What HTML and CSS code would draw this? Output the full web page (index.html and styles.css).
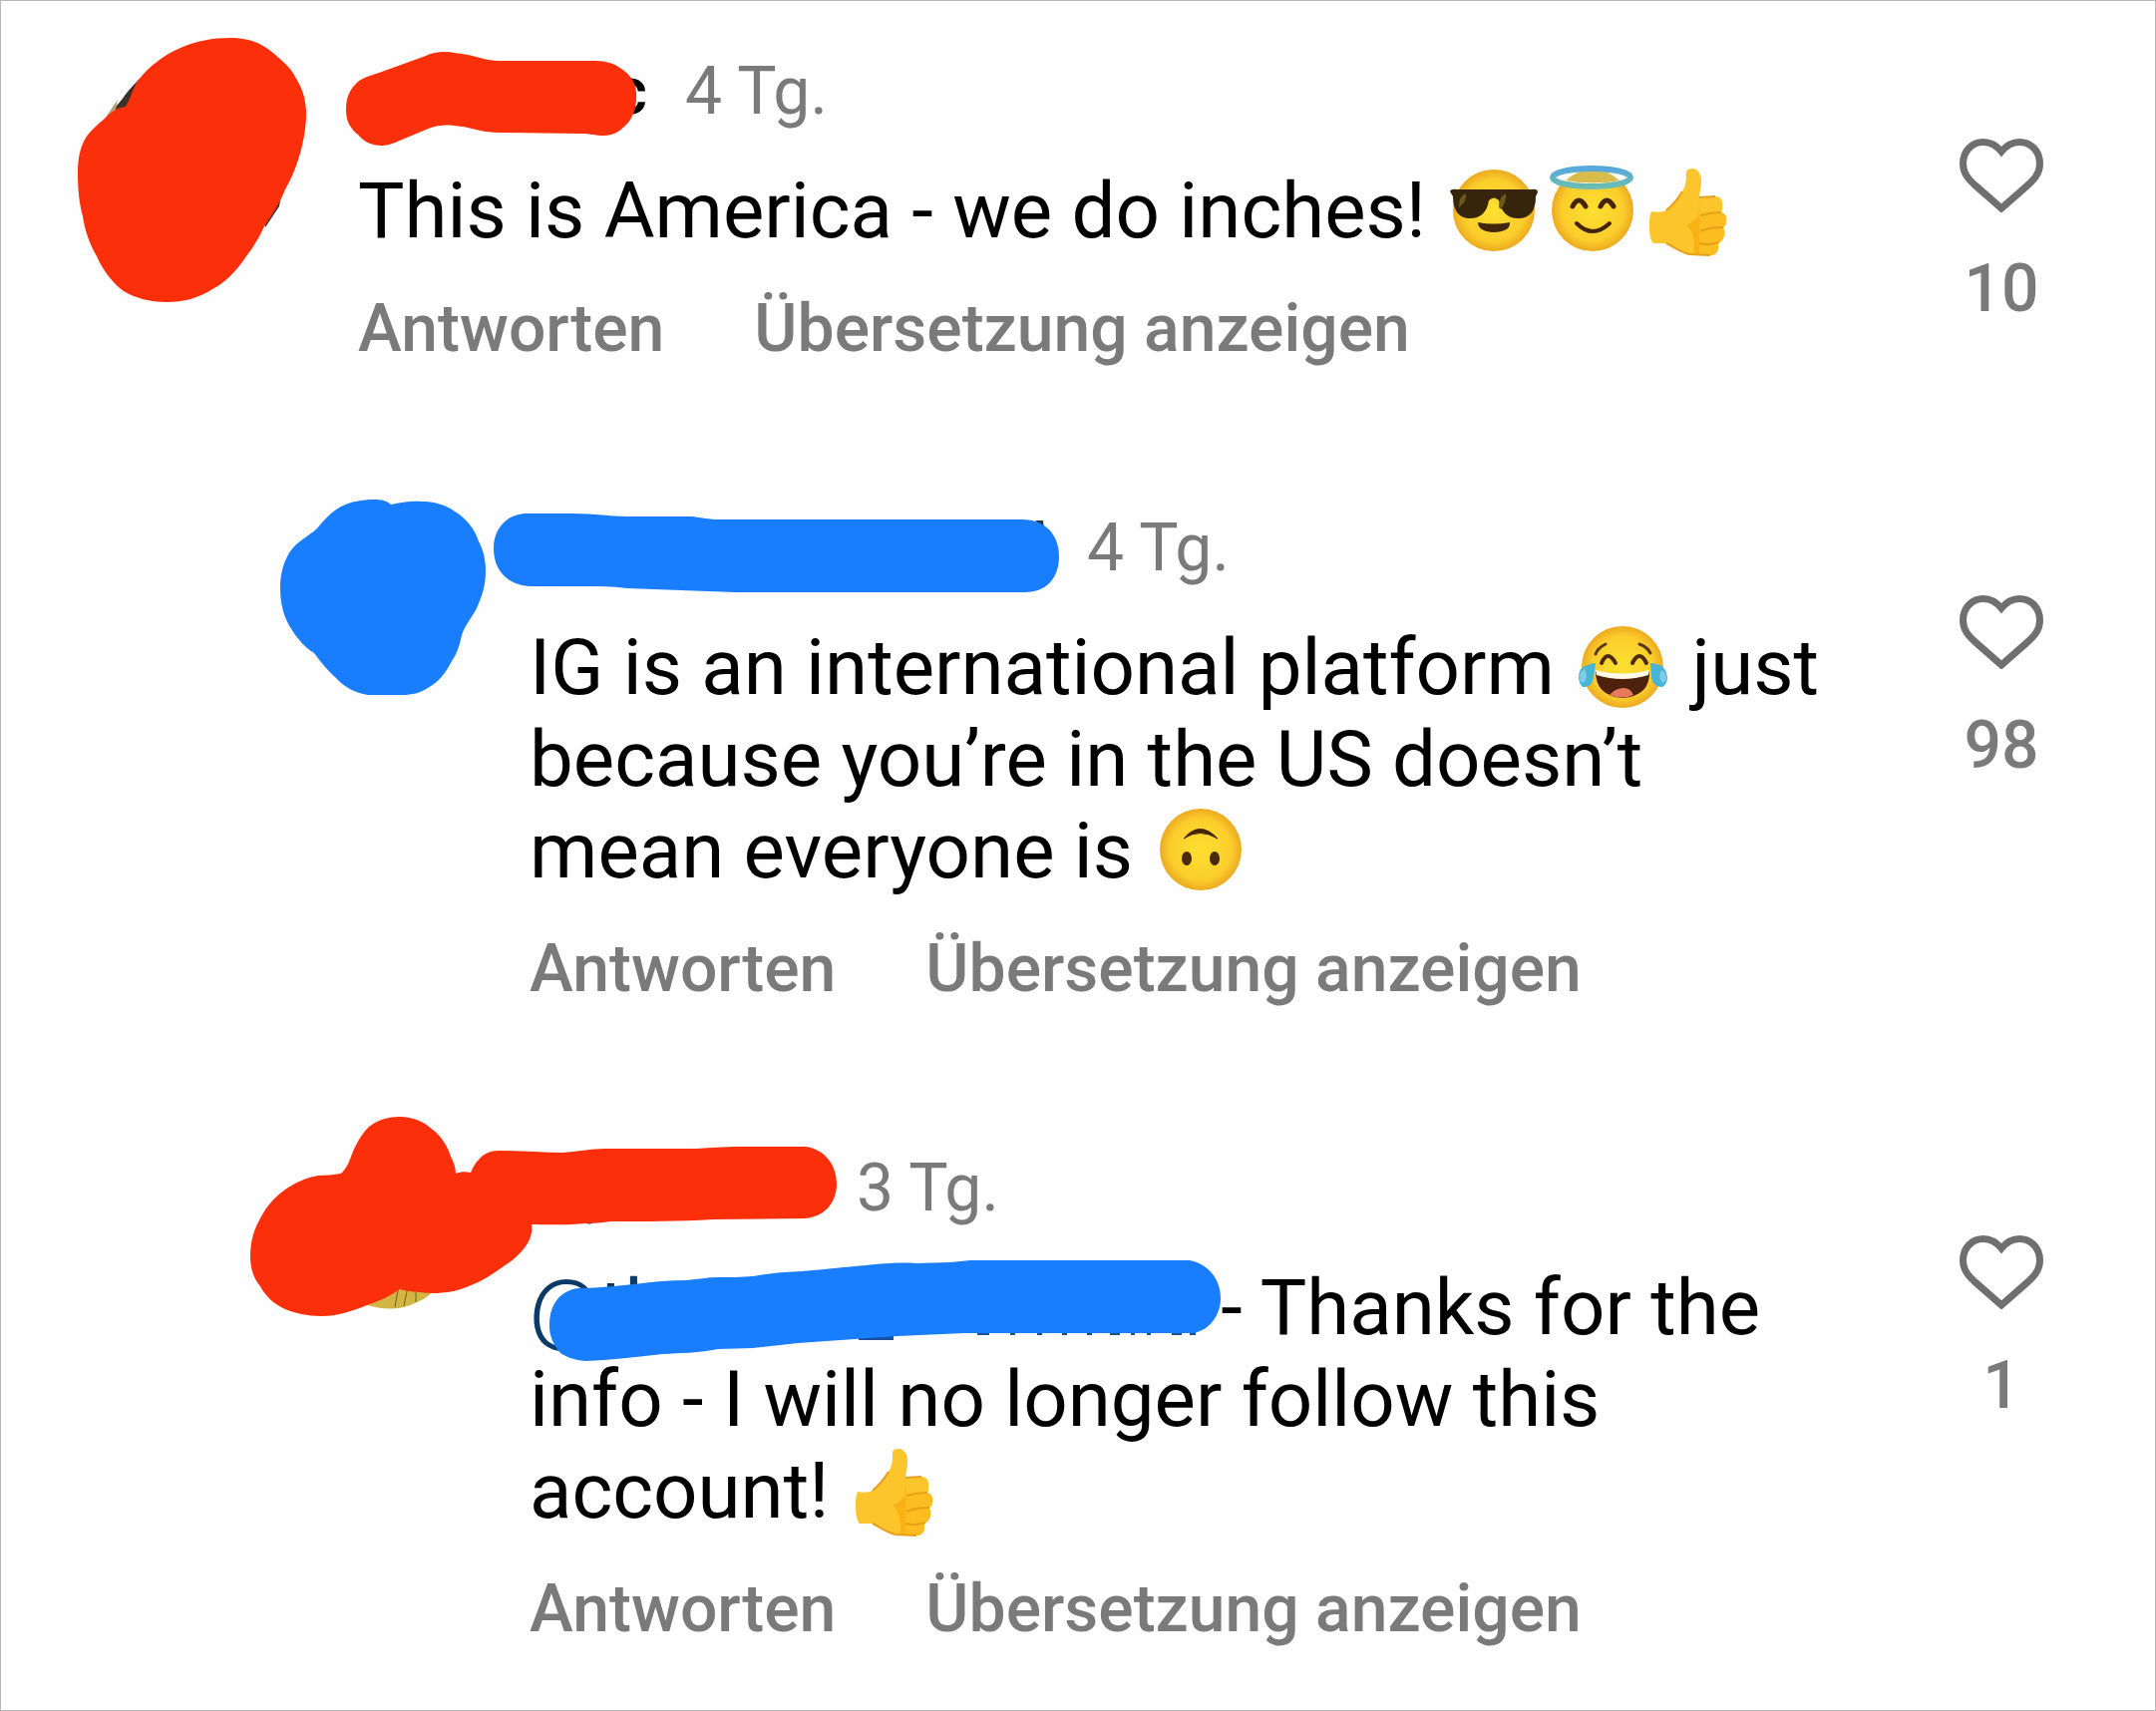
FILE: index.html
```html
<!DOCTYPE html>
<html lang="de">
<head>
<meta charset="utf-8">
<meta name="viewport" content="width=device-width, initial-scale=1">
<title>Kommentare</title>
<link rel="stylesheet" href="styles.css">
</head>
<body>
<svg class="defs" aria-hidden="true">
  <defs>
    <radialGradient id="face" cx="50%" cy="50%" r="50%">
      <stop offset="0" stop-color="#fde030"/>
      <stop offset="0.75" stop-color="#fbcd2c"/>
      <stop offset="1" stop-color="#ecaa20"/>
    </radialGradient>
    <linearGradient id="halo" x1="0" y1="0" x2="0" y2="1">
      <stop offset="0" stop-color="#58a8dc"/>
      <stop offset="1" stop-color="#6bbcb4"/>
    </linearGradient>
    <symbol id="heart" viewBox="0 0 84 74">
      <path d="M42 13C37 7 31 3.500 24 3.500C12 3.500 3.500 13 3.500 25C3.500 35 9 41 17 48L42 70L67 48C75 41 80.500 35 80.500 25C80.500 13 72 3.500 60 3.500C53 3.500 47 7 42 13Z" fill="none" stroke="#6f6f6f" stroke-width="7"/>
    </symbol>
    <symbol id="thumb" viewBox="0 0 99 92">
      <path d="M44 7C44 4 47 3 51 3C56 4 59 9 59 15C59 23 57 28 57 33L73 31C78 31 80 34 80 38C81 42 80 45 79 47C83 48 85 52 84 55C84 59 83 61 81 62C83 66 83 70 80 75C76 78 75 79 76 81C76 86 74 89 70 90C62 90 54 90 47 89C38 87 32 82 24 78L11 78C8 75 7 68 7 61C7 55 7 50 9 46C14 47 19 47 24 45C31 39 36 33 40 26C44 20 44 14 44 7Z" fill="#fcc52b"/>
      <path d="M57 33L56 46C55 52 51 56 45 60C51 66 53 76 52 89L70 90C74 89 76 86 76 81C75 79 76 78 80 75C83 70 83 66 81 62C83 61 84 59 84 55C85 52 83 48 79 47L58 50Z" fill="#fbbd20"/>
      <path d="M45 60C51 66 53 76 52 89L57 89L57 50C55 54 50 57 45 60Z" fill="#f9b116"/>
      <path d="M24 45C31 39 36 33 40 26M57 32L73 31M58 50C65 48 72 47 79 47M58 66C66 62 74 62 81 62M57 78C64 80 70 79 77 77M24 78C32 82 38 87 47 89L68 90" fill="none" stroke="#e6a01a" stroke-width="2"/>
    </symbol>
  </defs>
</svg>

<main class="thread">
  <article class="comment">
    <div class="body">
      <header class="head">
        <span class="name name-first">c</span>
        <time class="age">4 Tg.</time>
      </header>
      <p class="text">This is America - we do inches! <svg class="emoji" viewBox="0 0 99 92" role="img" aria-label="cool">
          <circle cx="49" cy="45" r="41" fill="url(#face)"/>
          <path d="M5 26Q6 23 12 24L87 24Q93 23 93 27L91 31Q91 52 75 53Q58 54 54 35Q49 30 44 35Q41 54 23 53Q8 51 8 31Z" fill="#36240b"/>
          <path d="M14 42Q14 30 21 28Q22 36 14 42M54 42Q54 31 61 28Q62 36 56 44" fill="#6d571e"/>
          <path d="M33 57Q49 60 65 57Q66 66 49 67Q33 66 33 57Z" fill="#44260b"/>
        </svg><svg class="emoji" viewBox="0 0 99 92" role="img" aria-label="Engel">
          <circle cx="49" cy="45" r="41" fill="url(#face)"/>
          <ellipse cx="48" cy="11" rx="37" ry="7" fill="#fefefe"/>
          <path d="M22 15Q34 4 49 4Q64 4 76 15Q49 20 22 15Z" fill="#d8bd4c"/>
          <ellipse cx="48" cy="12" rx="39" ry="9" fill="none" stroke="url(#halo)" stroke-width="6"/>
          <path d="M29 41Q35 29 42 41M57 41Q63 29 70 41" fill="none" stroke="#432409" stroke-width="5" stroke-linecap="round"/>
          <path d="M33 58Q49 74 66 58" fill="none" stroke="#432409" stroke-width="4" stroke-linecap="round"/>
        </svg><svg class="emoji" role="img" aria-label="Daumen hoch"><use href="#thumb"/></svg></p>
      <div class="actions">
        <button type="button" class="action">Antworten</button>
        <button type="button" class="action">Übersetzung anzeigen</button>
      </div>
    </div>
    <button type="button" class="like" aria-label="Gefällt mir">
      <svg class="heart" aria-hidden="true"><use href="#heart"/></svg>
      <span>10</span>
    </button>
    <svg class="scribble" viewBox="0 53 1300 300" aria-hidden="true">
      <path d="M147 73L138 81Q128 91 122 100L107 118L140 120ZM283 190L280 207L266 228L262 200Z" fill="#3a3128"/>
      <path d="M118 100L105 119L115 115Z" fill="#b79c78"/>
      <path class="red" d="M231 38C251 38 262 44 270 50C285 62 292 69 296 77C303 88 307 100 307 113C307 127 305 138 302 150C298 165 293 178 286 190C280 205 272 217 265 227C260 238 254 248 247 257C237 272 225 284 213 290C199 299 184 303 167 303C150 303 136 299 124 292C113 284 103 271 97 257C90 245 85 231 83 217C79 202 78 188 78 173C78 160 80 149 85 140C90 131 98 125 107 117Q117 107 126 107C131 98 133 90 138 81C151 65 165 55 181 48C197 41 213 38 231 38Z"/>
      <path class="red" d="M347 110C347 99 350 91 356 85C362 78 371 76 380 73L427 56C433 53 439 52 445 52C454 52 461 54 469 55C479 57 489 61 500 61L594 61C604 61 613 62 620 67C631 73 638 83 638 93C639 107 635 119 626 127C620 133 613 136 605 136C597 136 592 134 584 134L500 133C486 133 475 129 464 127C455 126 449 125 443 126C437 126 432 128 427 130L396 143C391 145 387 146 383 146C372 146 365 142 359 135C351 129 347 121 347 110Z"/>
    </svg>
  </article>

  <article class="comment reply">
    <div class="body">
      <header class="head">
        <span class="name name-second"></span>
        <time class="age">4 Tg.</time>
      </header>
      <p class="text">IG is an international platform <svg class="emoji" viewBox="0 0 99 92" role="img" aria-label="Freudentränen">
          <circle cx="49" cy="45" r="41" fill="url(#face)"/>
          <path d="M22 32Q24 26 32 22M66 22Q74 25 77 31" fill="none" stroke="#5b3a10" stroke-width="3" stroke-linecap="round"/>
          <path d="M28 41Q34 27 42 41M59 41Q66 27 73 41" fill="none" stroke="#4b2b0c" stroke-width="4" stroke-linecap="round"/>
          <path d="M22 49Q48 56 76 49Q77 74 49 76Q22 74 22 49Z" fill="#4d210b"/>
          <path d="M22 48Q48 55 76 48L75 53Q49 61 23 53Z" fill="#fffbe8"/>
          <path d="M36 73Q42 66 50 66Q57 66 60 73Q49 78 36 73Z" fill="#e57a5d"/>
          <path d="M22 41L20 56Q18 66 9 65Q2 58 7 47Q13 42 22 41ZM77 41Q89 42 92 48Q97 60 89 65Q80 65 78 56Z" fill="#46b5d6"/>
          <path d="M11 47Q15 55 10 61Q4 60 7 50ZM88 48Q84 56 89 61Q95 59 92 51Z" fill="#7fcbe8"/>
        </svg> just because you’re in the US doesn’t mean everyone is <svg class="emoji" viewBox="0 0 99 92" role="img" aria-label="umgedrehtes Lächeln">
          <circle cx="49" cy="44" r="41" fill="url(#face)"/>
          <path d="M32 33Q48 14 66 33Q48 22 32 33Z" fill="#432409" stroke="#432409" stroke-width="1"/>
          <ellipse cx="35" cy="53" rx="5" ry="7" fill="#4a2a0c"/>
          <ellipse cx="63" cy="53" rx="5" ry="7" fill="#4a2a0c"/>
        </svg></p>
      <div class="actions">
        <button type="button" class="action">Antworten</button>
        <button type="button" class="action">Übersetzung anzeigen</button>
      </div>
    </div>
    <button type="button" class="like" aria-label="Gefällt mir">
      <svg class="heart" aria-hidden="true"><use href="#heart"/></svg>
      <span>98</span>
    </button>
    <svg class="scribble" viewBox="0 511 1300 300" aria-hidden="true">
      <path d="M1038 522L1046 522L1047 530Z" fill="#26374f"/>
      <path class="blue" d="M375 501C382 501 388 502 392 506C402 504 412 502 423 503C437 503 448 507 456 513C468 520 476 531 480 543C485 552 487 562 487 573C487 587 483 599 478 610C473 620 466 627 463 637C461 647 458 656 453 663C447 675 440 684 429 690C421 695 413 697 404 697L369 697C356 695 345 689 337 680C327 671 322 664 315 655C307 650 299 642 293 632C285 621 281 606 281 590C281 576 284 564 291 553C298 543 309 538 318 530C325 521 333 513 342 508C352 503 363 501 375 501Z"/>
      <path class="blue" d="M529 515L575 515C597 515 611 518 629 518L694 518C704 519 711 521 721 521L1025 521C1048 521 1062 536 1062 558C1062 580 1049 594 1028 594L738 594C700 593 665 591 629 590C614 588 601 588 586 588L532 588C509 587 495 572 495 550C495 530 508 515 529 515Z"/>
    </svg>
  </article>

  <article class="comment reply">
    <div class="body">
      <header class="head">
        <span class="name name-third"></span>
        <time class="age">3 Tg.</time>
      </header>
      <p class="text"><a class="mention" href="#">@th</a> - Thanks for the info - I will no longer follow this account! <svg class="emoji" role="img" aria-label="Daumen hoch"><use href="#thumb"/></svg></p>
      <div class="actions">
        <button type="button" class="action">Antworten</button>
        <button type="button" class="action">Übersetzung anzeigen</button>
      </div>
    </div>
    <button type="button" class="like" aria-label="Gefällt mir">
      <svg class="heart" aria-hidden="true"><use href="#heart"/></svg>
      <span>1</span>
    </button>
    <svg class="scribble" viewBox="0 1153 1300 300" aria-hidden="true">
      <path d="M366 1308Q395 1318 418 1306Q428 1302 433 1296L401 1288Z" fill="#d3b544"/>
      <path d="M399 1294L396 1311M408 1295L405 1310M417 1296L417 1306" fill="none" stroke="#6d6320" stroke-width="1"/>
      <path d="M586 1224L597 1224Q593 1230 586 1226Z" fill="#5c1a10"/>
      <path d="M861 1336H896V1344H861ZM980 1334H992V1339H980ZM1013 1334H1018V1339H1013ZM1040 1334H1045V1339H1040ZM1065 1334H1070V1339H1065ZM1090 1334H1095V1339H1090ZM1113 1334H1123V1339H1113ZM1134 1334H1138V1339H1134ZM1150 1334H1154V1339H1150ZM1175 1334H1185V1339H1175ZM1193 1334H1199V1339H1193Z" fill="#1c4f9c"/>
      <path class="red" d="M342 1177C347 1172 349 1168 352 1160C356 1149 361 1140 368 1132C376 1124 388 1120 401 1120C414 1120 425 1125 434 1133C443 1140 449 1150 452 1160C455 1166 457 1171 457 1177C462 1175 467 1175 472 1176C474 1171 476 1167 480 1163C485 1157 492 1154 500 1154C521 1154 543 1156 564 1156C579 1155 593 1152 607 1152L699 1152C713 1151 726 1150 740 1150L806 1150C825 1151 839 1167 839 1187C839 1207 826 1221 806 1222L715 1223C680 1225 648 1225 613 1225C604 1226 596 1227 587 1227C569 1229 551 1228 533 1228C534 1233 533 1238 531 1243C526 1254 516 1263 505 1270C494 1278 483 1285 470 1290C458 1295 446 1297 434 1297C422 1296 411 1296 401 1293C391 1300 380 1305 368 1309C353 1315 339 1320 322 1320C308 1320 296 1317 286 1313C275 1308 266 1300 261 1290C254 1282 251 1271 251 1260C251 1246 254 1234 261 1222C267 1210 275 1201 286 1193C296 1186 307 1181 319 1179C327 1179 334 1178 342 1177Z"/>
      <path class="blue" d="M551 1330C551 1319 553 1311 559 1303C565 1296 575 1291 587 1292C622 1291 654 1284 689 1284C700 1283 709 1281 720 1281C732 1281 743 1281 755 1280C766 1278 775 1277 786 1276C814 1275 841 1271 868 1269C885 1267 902 1266 919 1267L953 1266L973 1264L1193 1264C1212 1268 1224 1283 1224 1302C1224 1319 1213 1334 1197 1337L967 1337C945 1338 922 1339 900 1340C867 1342 833 1345 800 1347L755 1352L720 1353C701 1357 682 1357 664 1358C638 1361 612 1364 587 1365C576 1364 568 1361 562 1357C555 1349 551 1340 551 1330Z"/>
    </svg>
  </article>
</main>
</body>
</html>
```
FILE: styles.css
```css
* {
  box-sizing: border-box;
}

body {
  margin: 0;
  background: #fefefe;
  color: #000;
  font-family: Roboto, "Liberation Sans", sans-serif;
}

.defs {
  position: absolute;
  width: 0;
  height: 0;
}

.thread {
  display: flex;
  flex-direction: column;
  gap: 142px;
  min-height: 100vh;
  padding: 53px 0;
  box-shadow: inset 0 0 0 1px #b8b8b8;
}

.comment {
  position: relative;
  display: flex;
  gap: 122px;
  padding: 0 113px 0 359px;
}

.reply {
  padding-left: 531px;
}

.body {
  flex: 1;
  min-width: 0;
}

.head {
  display: flex;
  gap: 38px;
  font-size: 66px;
  line-height: 78px;
}

.name {
  font-weight: 500;
  text-align: right;
}

.name-first,
.name-third {
  width: 290px;
}

.name-second {
  width: 521px;
}

.age {
  color: #7a7a7a;
}

.text {
  margin: 35px 0 33px;
  font-size: 78px;
  line-height: 92px;
}

.emoji {
  width: 99px;
  height: 92px;
  vertical-align: top;
}

.mention {
  display: inline-block;
  width: 674px;
  color: #0b3a68;
  text-decoration: none;
}

.actions {
  display: flex;
  gap: 90px;
}

.action,
.like {
  padding: 0;
  border: 0;
  background: none;
  color: #7a7a7a;
  font-family: inherit;
  font-size: 66px;
  font-weight: 500;
  line-height: 78px;
  cursor: pointer;
}

.like {
  display: flex;
  flex-direction: column;
  align-items: center;
  align-self: flex-start;
  gap: 38px;
  width: 84px;
  padding-top: 86px;
}

.heart {
  width: 84px;
  height: 74px;
}

.scribble {
  position: absolute;
  top: 0;
  left: 0;
  width: 1300px;
  height: 300px;
  overflow: visible;
  pointer-events: none;
}

.red {
  fill: #fb2f0a;
}

.blue {
  fill: #197efd;
}
```
